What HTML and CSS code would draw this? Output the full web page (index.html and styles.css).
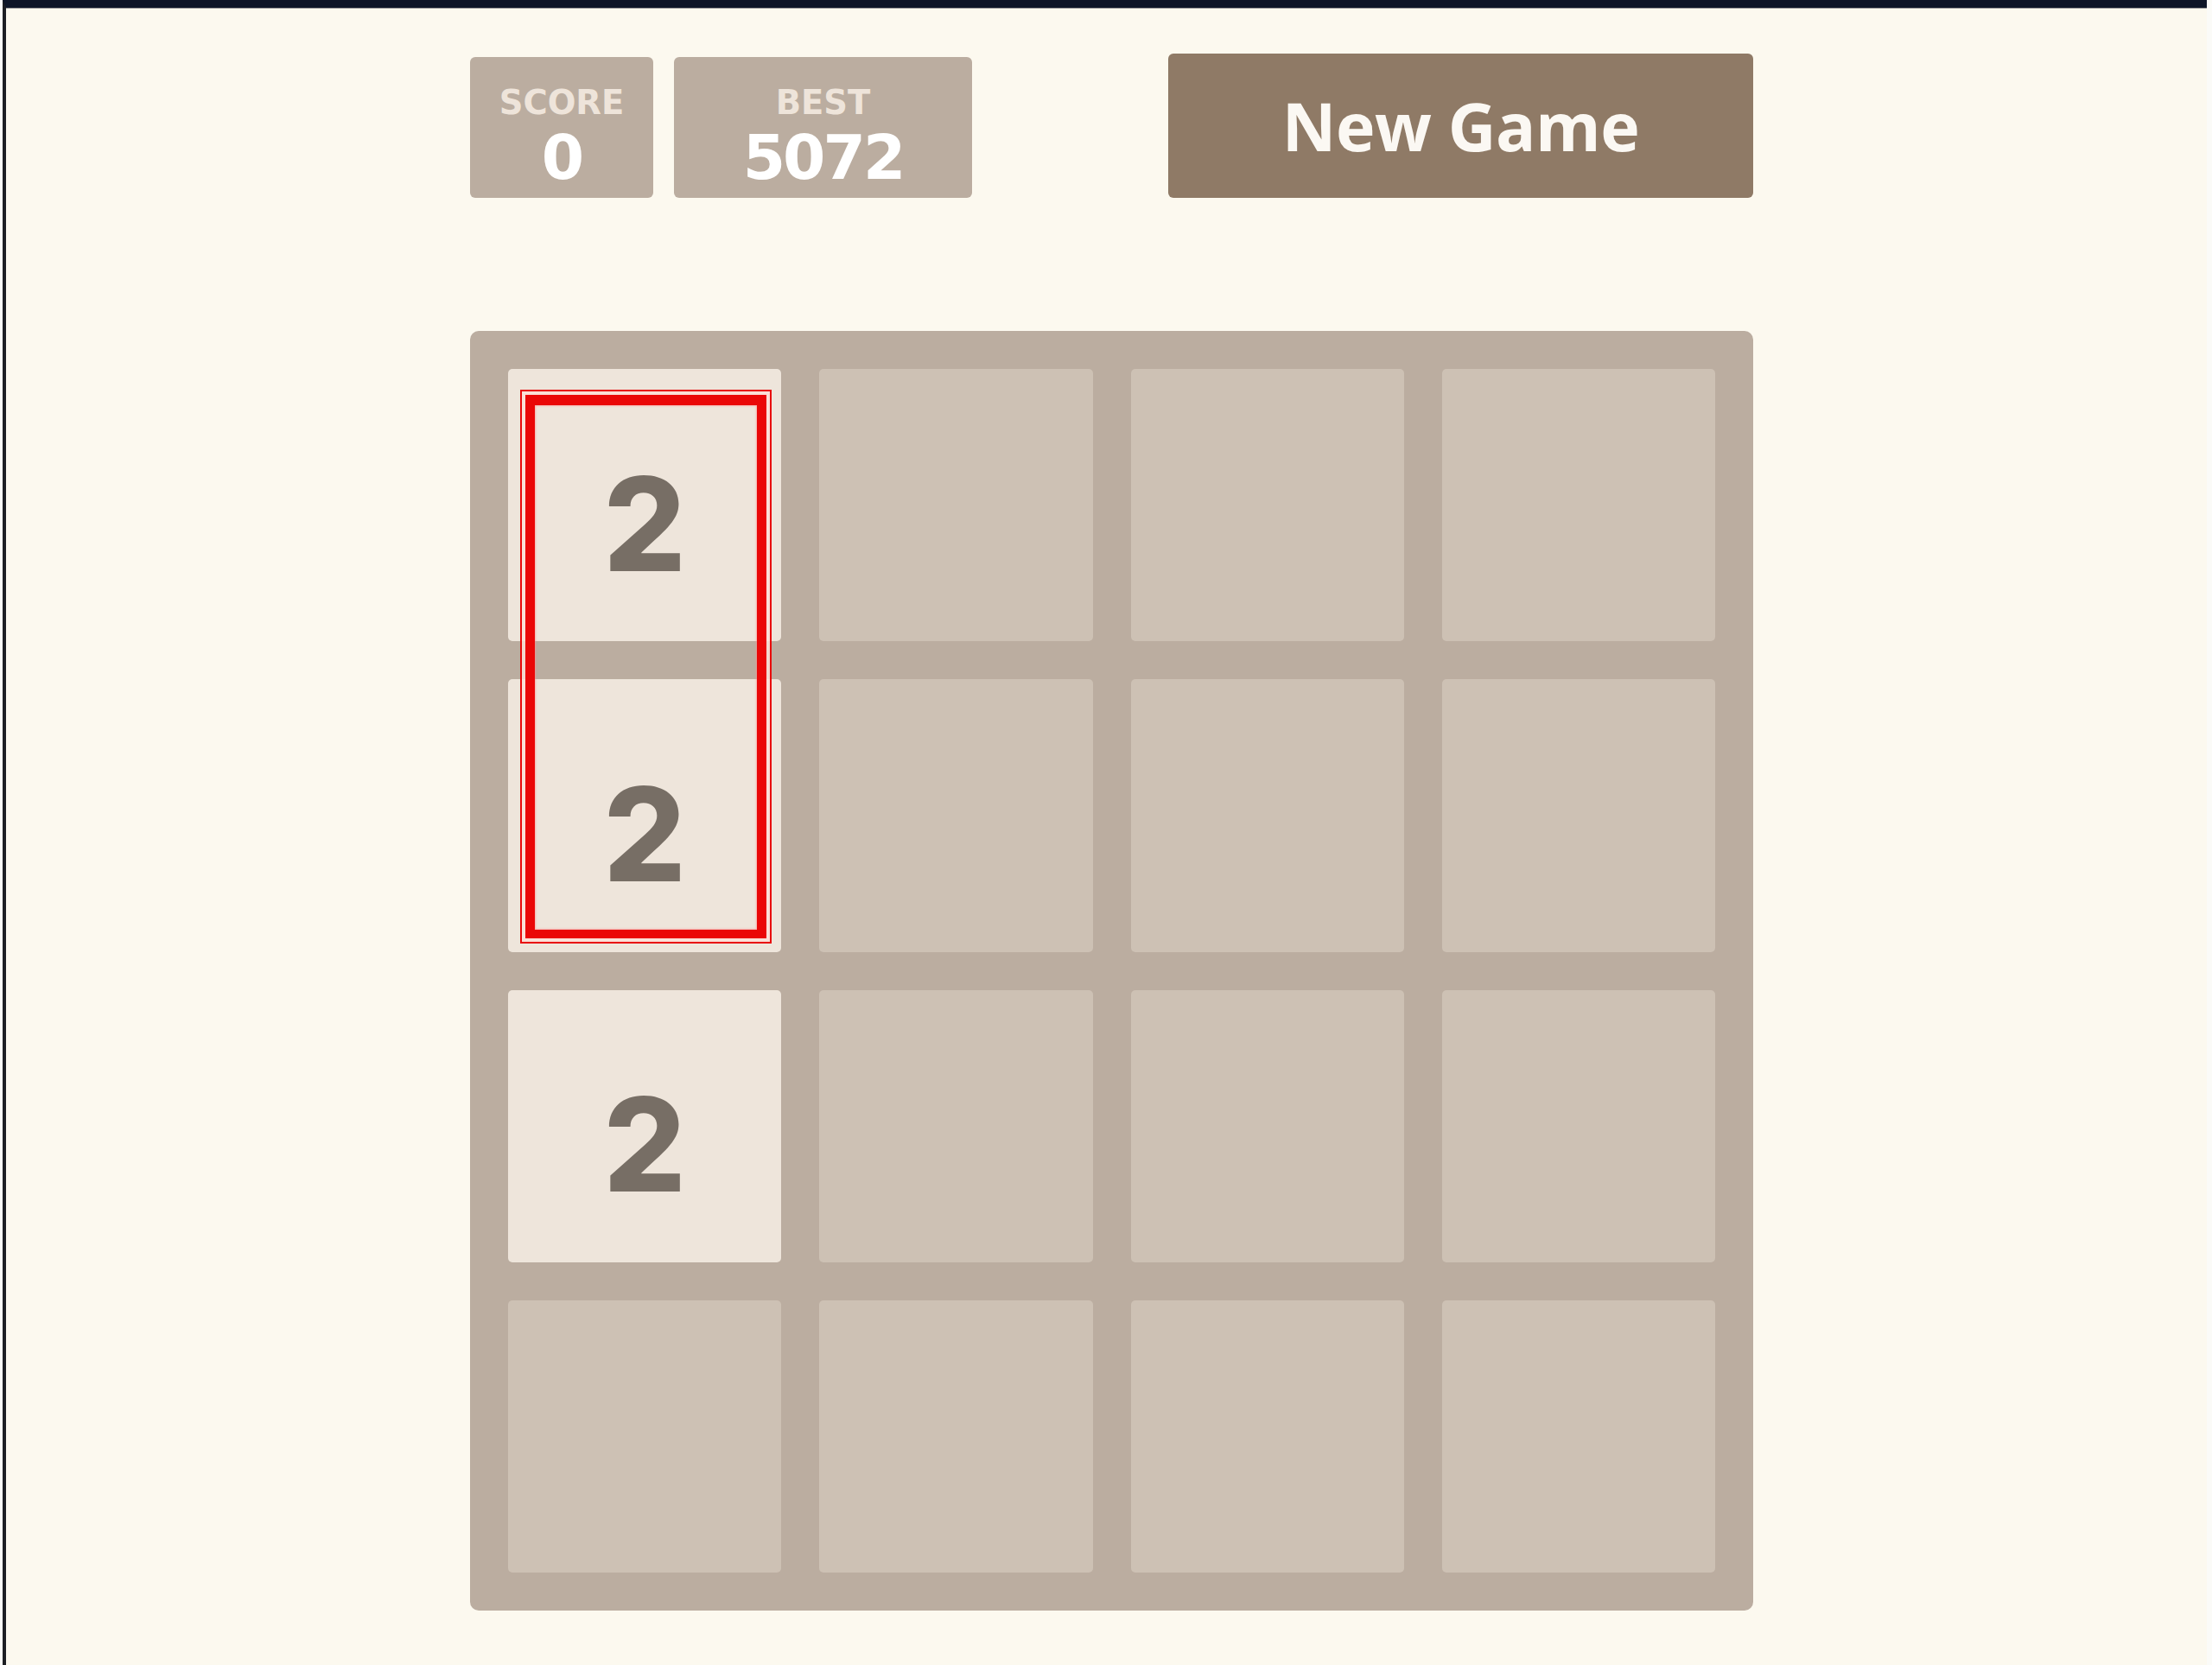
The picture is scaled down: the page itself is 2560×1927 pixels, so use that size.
FILE: index.html
```html
<!DOCTYPE html>
<html lang="en">
<head>
<meta charset="utf-8">
<title>2048</title>
<link rel="stylesheet" href="styles.css">
</head>
<body>
<div class="frame">
  <div class="game">
    <div class="header">
      <div class="scores">
        <div class="score-box score">
          <div class="label">SCORE</div>
          <div class="value">0</div>
        </div>
        <div class="score-box best">
          <div class="label">BEST</div>
          <div class="value">5072</div>
        </div>
      </div>
      <button class="new-game">New Game</button>
    </div>
    <div class="board">
      <div class="cell tile">2</div>
      <div class="cell"></div>
      <div class="cell"></div>
      <div class="cell"></div>
      <div class="cell tile">2</div>
      <div class="cell"></div>
      <div class="cell"></div>
      <div class="cell"></div>
      <div class="cell tile">2</div>
      <div class="cell"></div>
      <div class="cell"></div>
      <div class="cell"></div>
      <div class="cell"></div>
      <div class="cell"></div>
      <div class="cell"></div>
      <div class="cell"></div>
      <div class="highlight"><div class="highlight-inner"></div></div>
    </div>
  </div>
</div>
</body>
</html>
```
FILE: styles.css
```css
html {
  background: #fbfbf8;
}
body {
  margin: 0;
  overflow: hidden;
  font-family: "Open Sans", "Liberation Sans", sans-serif;
}
.frame {
  box-sizing: border-box;
  margin-left: 3px;
  width: 2551px;
  min-height: 1927px;
  background: #fcf9ef;
  border-top: 9px solid #0e1628;
  border-left: 4px solid #1d1f24;
  box-shadow: inset 0 1px 0 0 #9b9b9b;
}
.game {
  width: 1485px;
  margin-left: 537px;
  padding-top: 53px;
}
.header {
  display: flex;
  justify-content: space-between;
  align-items: flex-end;
}
.scores {
  display: flex;
  gap: 24px;
}
.score-box {
  box-sizing: border-box;
  height: 163px;
  background: #bbada0;
  border-radius: 6px;
  display: flex;
  flex-direction: column;
  align-items: center;
  padding-top: 33px;
  font-family: "DejaVu Sans", "Open Sans", sans-serif;
  font-weight: 700;
}
.score { width: 212px; }
.best { width: 345px; }
.label {
  font-size: 38.5px;
  line-height: 40px;
  color: #eee4da;
}
.value {
  margin-top: 8px;
  font-size: 71px;
  line-height: 72px;
  letter-spacing: -3px;
  color: #ffffff;
}
.new-game {
  width: 677px;
  height: 167px;
  border: none;
  border-radius: 6px;
  background: #8f7a66;
  color: #fbf8f3;
  font-family: "Open Sans", "Liberation Sans", sans-serif;
  font-weight: 700;
  font-size: 77px;
  letter-spacing: -0.5px;
  padding: 0;
}
.board {
  position: relative;
  box-sizing: border-box;
  margin-top: 154px;
  width: 1485px;
  height: 1481px;
  padding: 44px;
  background: #bbada0;
  border-radius: 10px;
  display: grid;
  grid-template-columns: repeat(4, 1fr);
  grid-template-rows: repeat(4, 1fr);
  gap: 44px;
}
.cell {
  background: #cdc1b4;
  border-radius: 5px;
}
.tile {
  box-sizing: border-box;
  background: #eee5db;
  color: #776e65;
  font-family: "Inter", "Open Sans", sans-serif;
  font-weight: 800;
  font-size: 150px;
  line-height: 1;
  display: flex;
  align-items: center;
  justify-content: center;
  padding-top: 44px;
}
.highlight {
  position: absolute;
  left: 58px;
  top: 68px;
  width: 291px;
  height: 641px;
  box-sizing: border-box;
  border: 2px solid #e8080a;
  padding: 4px;
}
.highlight-inner {
  box-sizing: border-box;
  width: 100%;
  height: 100%;
  border: 11px solid #ea0707;
  border-top-width: 12px;
  border-bottom-width: 10px;
  box-shadow: 0 0 0 4px rgba(253, 222, 214, 0.85), inset 0 0 2px 1px rgba(255, 140, 140, 0.6);
}
```
